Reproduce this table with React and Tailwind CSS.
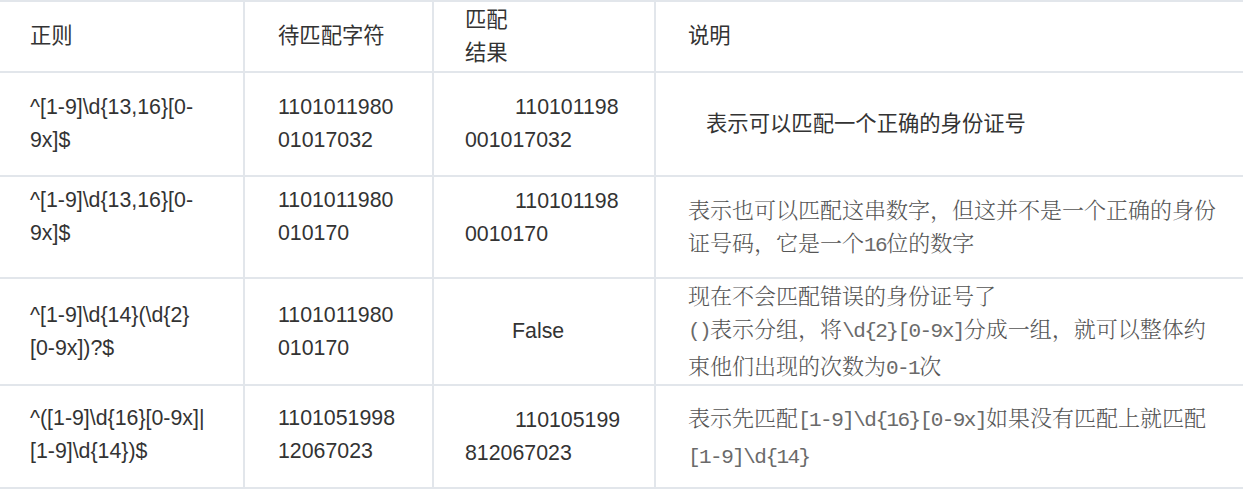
import React from "react";

const M = ({ children }) => (
  <span className="font-['Liberation_Mono',monospace] text-[21px] tracking-[-1.55px] text-[#6a6a6a]">{children}</span>
);

const Cell = ({ col, h, extra = "", children }) => {
  const cols = [
    "pl-[30px] pr-[20px] border-r-2",
    "pl-[33px] pr-[20px] border-r-2",
    "pl-[31px] pr-[20px] border-r-2",
    "pl-[32px] pr-[20px]",
  ];
  return (
    <div className={`flex items-center border-b-2 border-[#e2e6eb] ${cols[col]} ${h} ${extra}`}>
      <div className="whitespace-nowrap">{children}</div>
    </div>
  );
};

const Serif = ({ children }) => (
  <div className="font-['Noto_Serif_CJK_SC','Noto_Sans_CJK_SC',serif] font-light text-[22px] leading-[33px] text-[#555]">
    {children}
  </div>
);

export default function App() {
  return (
    <div className="w-[1243px] h-[498px] bg-white font-['Liberation_Sans','Noto_Sans_CJK_SC',sans-serif] text-[21.33px] leading-[33px] text-[#333]">
      <div className="grid grid-cols-[245px_189px_222px_1fr] border-t-2 border-[#e2e6eb]">
        {/* header */}
        <Cell col={0} h="h-[71px]">正则</Cell>
        <Cell col={1} h="h-[71px]">待匹配字符</Cell>
        <Cell col={2} h="h-[71px]">
          匹配
          <br />
          结果
        </Cell>
        <Cell col={3} h="h-[71px]">说明</Cell>

        {/* row 1 */}
        <Cell col={0} h="h-[104px]">
          ^[1-9]\d{"{"}13,16{"}"}[0-
          <br />
          9x]$
        </Cell>
        <Cell col={1} h="h-[104px]">
          1101011980
          <br />
          01017032
        </Cell>
        <Cell col={2} h="h-[104px]">
          <span className="inline-block w-[50px]" />
          110101198
          <br />
          001017032
        </Cell>
        <Cell col={3} h="h-[104px]">
          <span className="inline-block w-[18px]" />
          表示可以匹配一个正确的身份证号
        </Cell>

        {/* row 2 */}
        <Cell col={0} h="h-[102px]" extra="pb-[20px]">
          ^[1-9]\d{"{"}13,16{"}"}[0-
          <br />
          9x]$
        </Cell>
        <Cell col={1} h="h-[102px]" extra="pb-[20px]">
          1101011980
          <br />
          010170
        </Cell>
        <Cell col={2} h="h-[102px]" extra="pb-[18px]">
          <span className="inline-block w-[50px]" />
          110101198
          <br />
          0010170
        </Cell>
        <Cell col={3} h="h-[102px]">
          <Serif>
            表示也可以匹配这串数字，但这并不是一个正确的身份
            <br />
            证号码，它是一个<M>16</M>位的数字
          </Serif>
        </Cell>

        {/* row 3 */}
        <Cell col={0} h="h-[107px]">
          ^[1-9]\d{"{"}14{"}"}(\d{"{"}2{"}"}
          <br />
          [0-9x])?$
        </Cell>
        <Cell col={1} h="h-[107px]">
          1101011980
          <br />
          010170
        </Cell>
        <Cell col={2} h="h-[107px]">
          <span className="inline-block w-[47px]" />
          False
        </Cell>
        <Cell col={3} h="h-[107px]">
          <Serif>
            现在不会匹配错误的身份证号了
            <br />
            <M>()</M>表示分组，将<M>\d{"{"}2{"}"}[0-9x]</M>分成一组，就可以整体约
            <br />
            束他们出现的次数为<M>0-1</M>次
          </Serif>
        </Cell>

        {/* row 4 */}
        <Cell col={0} h="h-[103px]" extra="pb-[4px]">
          ^([1-9]\d{"{"}16{"}"}[0-9x]|
          <br />
          [1-9]\d{"{"}14{"}"})$
        </Cell>
        <Cell col={1} h="h-[103px]" extra="pb-[4px]">
          1101051998
          <br />
          12067023
        </Cell>
        <Cell col={2} h="h-[103px]">
          <span className="inline-block w-[50px]" />
          110105199
          <br />
          812067023
        </Cell>
        <Cell col={3} h="h-[103px]">
          <Serif>
            表示先匹配<M>[1-9]\d{"{"}16{"}"}[0-9x]</M>如果没有匹配上就匹配
            <br />
            <M>[1-9]\d{"{"}14{"}"}</M>
          </Serif>
        </Cell>
      </div>
    </div>
  );
}
